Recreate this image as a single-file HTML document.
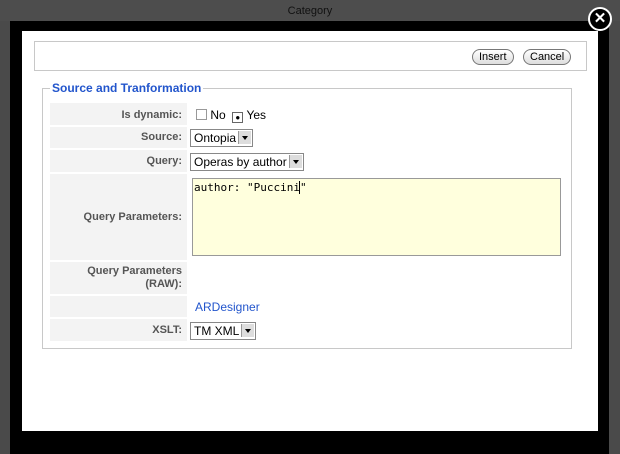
<!DOCTYPE html>
<html><head><style>
body{margin:0;width:620px;height:454px;background:#4a4a4a;position:relative;overflow:hidden;font-family:"Liberation Sans",sans-serif;}
.top{position:absolute;left:0;top:0;width:620px;height:21px;background:#4d4d4d;color:#111;font-size:11px;text-align:center;line-height:22px;}
.frame{position:absolute;left:10px;top:21px;width:599px;height:433px;background:#000;}
.inner{position:absolute;left:22px;top:31px;width:576px;height:400px;background:#fff;}
.bar{position:absolute;left:12px;top:10px;width:551px;height:28px;border:1px solid #c8c8c8;}
.btn{position:absolute;top:7px;height:14px;border:1px solid #777;border-radius:8px;font-size:11px;line-height:14px;padding:0 6px;background:linear-gradient(#fff,#ddd);}
.fs{position:absolute;left:20px;top:57px;width:528px;height:259px;border:1px solid #c8c8c8;}
.lg{position:absolute;left:7px;top:-8px;background:#fff;padding:0 2px;color:#2255cc;font-weight:bold;font-size:12px;}
.row{position:absolute;left:7px;width:510px;}
.lab{position:absolute;left:0;top:0;bottom:0;width:137px;background:#f3f3f3;color:#555;font-weight:bold;font-size:11px;text-align:right;box-sizing:border-box;padding-right:5px;}
.val{position:absolute;left:142px;top:0;font-size:12px;}
.sel{display:inline-block;border:1px solid #888;height:16px;line-height:16px;padding:0 16px 0 3px;position:relative;background:#fff;font-size:12px}
.sel:after{content:"";position:absolute;right:1px;top:1px;width:12px;height:13px;background:#ddd;border-left:1px solid #999;}
.sel i{position:absolute;right:4px;top:6px;border:3px solid transparent;border-top:4px solid #000;z-index:2;width:0;height:0}
.x{position:absolute;left:588px;top:7px;width:20px;height:20px;border-radius:50%;background:#000;border:2px solid #fff;color:#fff;font-weight:bold;font-size:15px;text-align:center;line-height:20px;}
</style></head><body>
<div class="top">Category</div>
<div class="frame"></div>
<div class="inner">
<div class="bar"><span class="btn" style="left:437px">Insert</span><span class="btn" style="left:488px">Cancel</span></div>
<div class="fs"><span class="lg">Source and Tranformation</span>
<div class="row" style="top:14px;height:22px"><div class="lab" style="line-height:24px">Is dynamic:</div><div class="val" style="top:5px"><span style="display:inline-block;width:9px;height:9px;border:1px solid #999;vertical-align:-1px;margin-left:4px;border-radius:0"></span> No &nbsp;<span style="display:inline-block;width:9px;height:9px;border:1px solid #666;vertical-align:-1px;text-align:center;font-size:8px;line-height:9px">●</span> Yes</div></div>
<div class="row" style="top:38px;height:21px"><div class="lab" style="line-height:21px">Source:</div><div class="val" style="top:2px;left:140px"><span class="sel">Ontopia<i></i></span></div></div>
<div class="row" style="top:61px;height:22px"><div class="lab" style="line-height:22px">Query:</div><div class="val" style="top:3px;left:140px"><span class="sel">Operas by author<i></i></span></div></div>
<div class="row" style="top:85px;height:86px"><div class="lab" style="line-height:86px">Query Parameters:</div><div style="position:absolute;left:142px;top:4px;width:369px;height:78px;border:1px solid #999;background:#ffffdd;font-family:'DejaVu Sans Mono',monospace;font-size:11px;padding:2px 1px;box-sizing:border-box">author: "Puccini<span style="border-left:1px solid #000;margin-left:-1px"></span>"</div></div>
<div class="row" style="top:173px;height:32px"><div class="lab" style="padding-top:3px;line-height:13px">Query Parameters<br>(RAW):</div></div>
<div class="row" style="top:207px;height:21px"><div class="lab"></div><div class="val" style="top:4px;left:145px;color:#2255cc">ARDesigner</div></div>
<div class="row" style="top:230px;height:22px"><div class="lab" style="line-height:22px">XSLT:</div><div class="val" style="top:3px;left:140px"><span class="sel">TM XML<i></i></span></div></div>
</div>
</div>
<div class="x">✕</div>
</body></html>
